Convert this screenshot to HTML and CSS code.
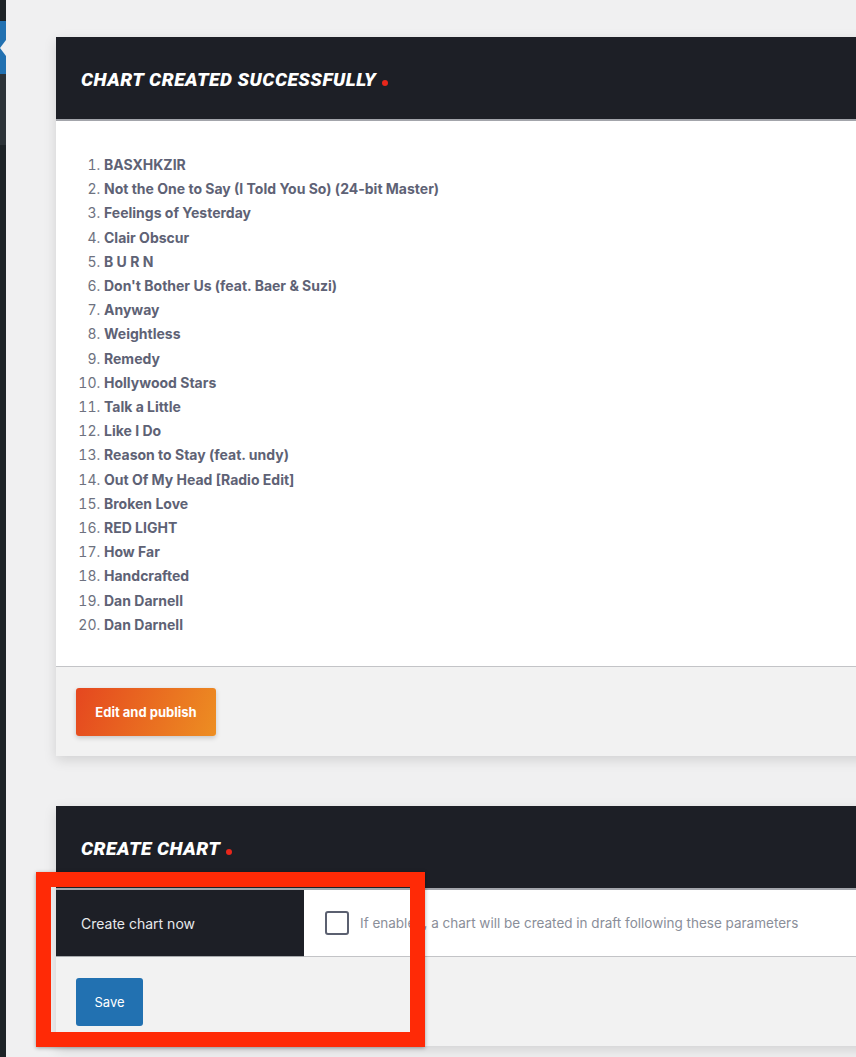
FILE: index.html
```html
<!DOCTYPE html>
<html>
<head>
<title>Charts</title>
<link rel="stylesheet" href="styles.css">
</head>
<body>
<div class="adminmenu">
<div class="menu-current"><span class="menu-arrow"></span></div>
<div class="menu-sub"></div>
</div>

<div class="wrap">

<div class="card">
<div class="card-head"><h2 class="card-title">Chart created successfully<span class="dot"></span></h2></div>
<div class="card-body">
<ol class="tracks">
<li><strong>BASXHKZIR</strong></li>
<li><strong>Not the One to Say (I Told You So) (24-bit Master)</strong></li>
<li><strong>Feelings of Yesterday</strong></li>
<li><strong>Clair Obscur</strong></li>
<li><strong>B U R N</strong></li>
<li><strong>Don't Bother Us (feat. Baer &amp; Suzi)</strong></li>
<li><strong>Anyway</strong></li>
<li><strong>Weightless</strong></li>
<li><strong>Remedy</strong></li>
<li><strong>Hollywood Stars</strong></li>
<li><strong>Talk a Little</strong></li>
<li><strong>Like I Do</strong></li>
<li><strong>Reason to Stay (feat. undy)</strong></li>
<li><strong>Out Of My Head [Radio Edit]</strong></li>
<li><strong>Broken Love</strong></li>
<li><strong>RED LIGHT</strong></li>
<li><strong>How Far</strong></li>
<li><strong>Handcrafted</strong></li>
<li><strong>Dan Darnell</strong></li>
<li><strong>Dan Darnell</strong></li>
</ol>
</div>
<div class="card-foot">
<a class="button button-hot" href="#">Edit and publish</a>
</div>
</div>

<div class="card">
<div class="card-head"><h2 class="card-title">Create chart<span class="dot"></span></h2></div>
<div class="form-row">
<div class="form-label">Create chart now</div>
<div class="form-field">
<span class="checkbox"></span>
<span class="description">If enabled, a chart will be created in draft following these parameters</span>
</div>
</div>
<div class="card-foot">
<a class="button button-primary" href="#">Save</a>
</div>
<div class="highlight"></div>
</div>

</div>
</body>
</html>
```

FILE: styles.css
```css
/* Chart admin page */

html, body
{ margin: 0;
padding: 0;
height: 100%;
}

body
{ background-color: #f0f0f1;
font-family: Inter, "Liberation Sans", sans-serif;
display: flex;
overflow: hidden;
}

/* Admin menu strip */

.adminmenu
{ width: 6px;
flex: none;
background-color: #1d2327;
padding-top: 21px;
}

.menu-current
{ height: 53px;
background-color: #2271b1;
display: flex;
justify-content: flex-end;
align-items: center;
}

.menu-arrow
{ width: 0;
height: 0;
border-top: 8px solid transparent;
border-bottom: 8px solid transparent;
border-right: 6px solid #f0f0f1;
}

.menu-sub
{ height: 71px;
background-color: #2c3338;
}

/* Cards */

.wrap
{ padding: 37px 0 0 50px;
flex: none;
}

.card
{ position: relative;
width: 830px;
margin-bottom: 50px;
background-color: #f2f2f2;
box-shadow: 0 4px 12px rgba(0, 0, 0, 0.13);
}

.card-head
{ background-color: #1d1f26;
border-bottom: 2px solid #a3a5ab;
padding: 0 25px;
height: 82px;
display: flex;
align-items: center;
}

.card-title
{ margin: 0;
padding-top: 2px;
color: #ffffff;
font-family: Roboto, sans-serif;
font-size: 19px;
font-weight: 900;
font-style: italic;
text-transform: uppercase;
letter-spacing: 0.5px;
}

.dot
{ display: inline-block;
width: 6px;
height: 6px;
margin-left: 6px;
border-radius: 50%;
background-color: #e8271b;
}

.card-body
{ background-color: #ffffff;
border-bottom: 1px solid #c3c4c7;
padding: 35px 25px 26px;
}

.tracks
{ margin: 0;
padding-left: 23px;
color: #6e7280;
font-size: 14px;
line-height: 18.2px;
}

.tracks li
{ margin-bottom: 6px;
}

.tracks strong
{ color: #5e6275;
font-weight: 700;
}

.card-foot
{ padding: 21px 20px 20px;
}

/* Buttons */

.button
{ display: inline-flex;
align-items: center;
justify-content: center;
height: 48px;
border-radius: 3px;
color: #ffffff;
font-size: 13px;
text-decoration: none;
}

.button-hot
{ width: 140px;
font-weight: 700;
background: linear-gradient(110deg, #e5471f 0%, #ed8e22 100%);
box-shadow: 0 2px 5px rgba(0, 0, 0, 0.18);
}

.button-primary
{ width: 67px;
background-color: #2271b1;
}

/* Settings row */

.form-row
{ display: flex;
height: 66px;
background-color: #ffffff;
border-bottom: 1px solid #c3c4c7;
}

.form-label
{ width: 223px;
padding-left: 25px;
background-color: #1d1f26;
border-bottom: 1px solid #a7aaad;
margin-bottom: -1px;
color: #e8e9ec;
font-size: 14px;
display: flex;
align-items: center;
}

.form-field
{ display: flex;
align-items: center;
padding-left: 21px;
}

.checkbox
{ width: 20px;
height: 20px;
border: 2px solid #5b6070;
border-radius: 3px;
margin-right: 11px;
}

.description
{ color: #8a8e99;
font-size: 13.5px;
}

/* Annotation */

.highlight
{ position: absolute;
left: -20px;
top: 66px;
width: 359px;
height: 145px;
border: 15px solid #ff2a06;
box-shadow: 0 1px 4px rgba(0, 0, 0, 0.35);
}
```
